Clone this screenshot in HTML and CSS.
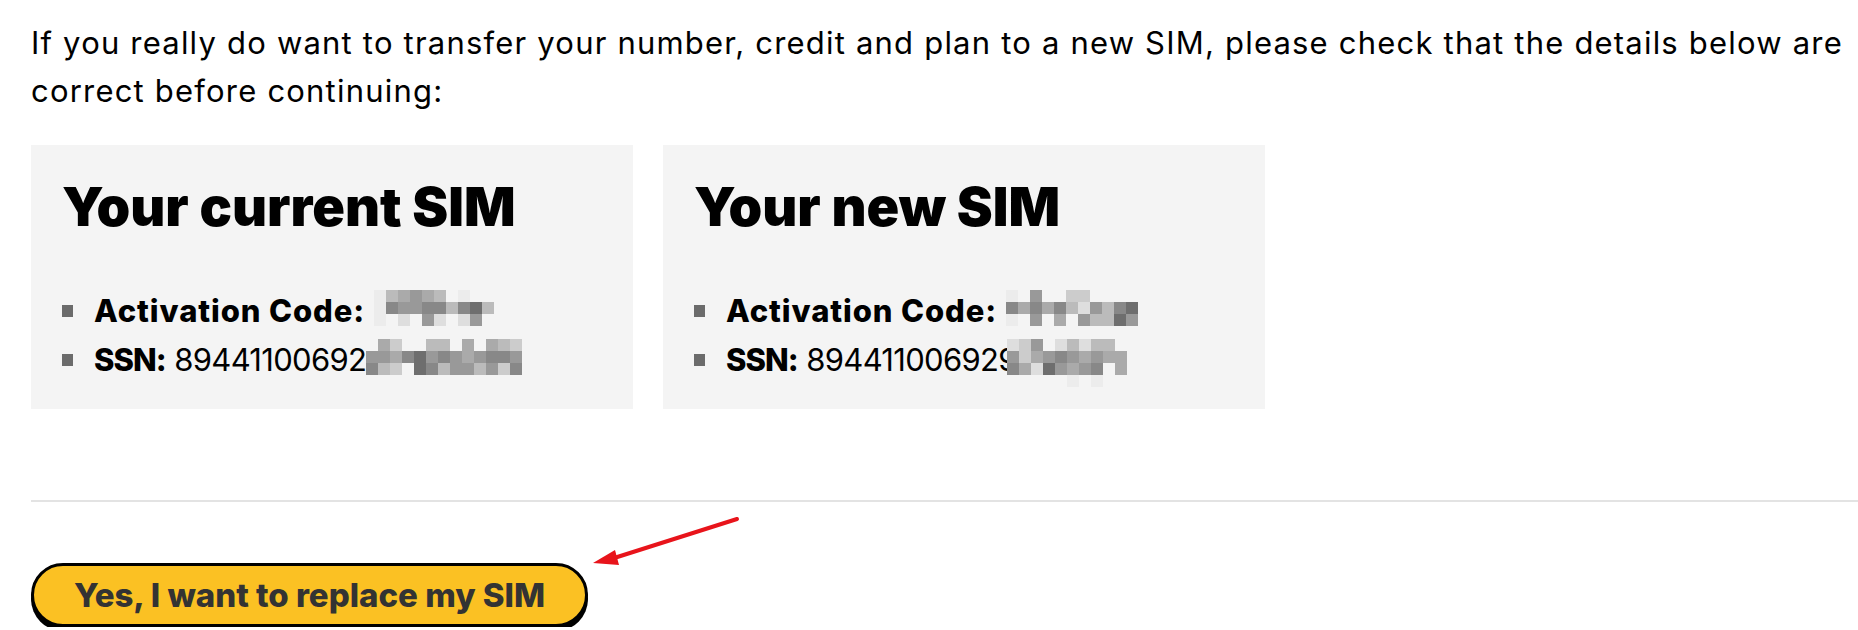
FILE: index.html
```html
<!DOCTYPE html>
<html lang="en">
<head>
<meta charset="utf-8">
<title>Replace SIM</title>
<link rel="stylesheet" href="styles.css">
</head>
<body>
<main class="page">
  <p class="intro">If you really do want to transfer your number, credit and plan to a new SIM, please check that the details below are correct before continuing:</p>
  <div class="cards">
    <section class="card">
      <h2 class="card-title">Your current SIM</h2>
      <ul class="details">
        <li><strong>Activation Code:</strong> <span class="mosaic m10"><i class="c1"></i><i class="c4"></i><i class="c5"></i><i class="c6"></i><i class="c5"></i><i class="c4"></i><i class="c0"></i><i class="c1"></i><i class="c0"></i><i class="c0"></i><i class="c1"></i><i class="c7"></i><i class="c6"></i><i class="c6"></i><i class="c7"></i><i class="c7"></i><i class="c4"></i><i class="c7"></i><i class="c8"></i><i class="c4"></i><i class="c1"></i><i class="c0"></i><i class="c2"></i><i class="c0"></i><i class="c6"></i><i class="c2"></i><i class="c0"></i><i class="c2"></i><i class="c6"></i><i class="c0"></i></span></li>
        <li><strong class="short">SSN:</strong> <span class="ssn">89441100692</span><span class="mosaic m13"><i class="c0"></i><i class="c5"></i><i class="c3"></i><i class="c0"></i><i class="c0"></i><i class="c4"></i><i class="c4"></i><i class="c0"></i><i class="c5"></i><i class="c0"></i><i class="c5"></i><i class="c4"></i><i class="c3"></i><i class="c6"></i><i class="c6"></i><i class="c5"></i><i class="c7"></i><i class="c8"></i><i class="c6"></i><i class="c7"></i><i class="c6"></i><i class="c5"></i><i class="c6"></i><i class="c7"></i><i class="c7"></i><i class="c6"></i><i class="c7"></i><i class="c4"></i><i class="c3"></i><i class="c0"></i><i class="c8"></i><i class="c7"></i><i class="c4"></i><i class="c6"></i><i class="c6"></i><i class="c4"></i><i class="c6"></i><i class="c3"></i><i class="c7"></i></span></li>
      </ul>
    </section>
    <section class="card">
      <h2 class="card-title">Your new SIM</h2>
      <ul class="details">
        <li><strong>Activation Code:</strong> <span class="mosaic m11"><i class="c1"></i><i class="c0"></i><i class="c6"></i><i class="c0"></i><i class="c0"></i><i class="c3"></i><i class="c3"></i><i class="c0"></i><i class="c0"></i><i class="c0"></i><i class="c0"></i><i class="c7"></i><i class="c5"></i><i class="c7"></i><i class="c5"></i><i class="c7"></i><i class="c4"></i><i class="c2"></i><i class="c6"></i><i class="c4"></i><i class="c7"></i><i class="c8"></i><i class="c1"></i><i class="c0"></i><i class="c6"></i><i class="c0"></i><i class="c5"></i><i class="c0"></i><i class="c6"></i><i class="c4"></i><i class="c4"></i><i class="c8"></i><i class="c6"></i></span></li>
        <li><strong class="short">SSN:</strong> <span class="ssn">894411006929</span><span class="mosaic m10 shift"><i class="c2"></i><i class="c3"></i><i class="c6"></i><i class="c0"></i><i class="c2"></i><i class="c4"></i><i class="c2"></i><i class="c4"></i><i class="c4"></i><i class="c0"></i><i class="c6"></i><i class="c3"></i><i class="c5"></i><i class="c6"></i><i class="c7"></i><i class="c6"></i><i class="c5"></i><i class="c6"></i><i class="c5"></i><i class="c5"></i><i class="c7"></i><i class="c5"></i><i class="c2"></i><i class="c8"></i><i class="c6"></i><i class="c5"></i><i class="c6"></i><i class="c7"></i><i class="c0"></i><i class="c5"></i><i class="c0"></i><i class="c0"></i><i class="c0"></i><i class="c0"></i><i class="c0"></i><i class="c1"></i><i class="c0"></i><i class="c1"></i><i class="c0"></i><i class="c0"></i></span></li>
      </ul>
    </section>
  </div>
  <hr class="rule">
  <div class="actions">
    <button class="btn-primary" type="button">Yes, I want to replace my SIM</button>
    <svg class="arrow" width="160" height="60" viewBox="0 0 160 60" aria-hidden="true">
      <line x1="146" y1="6" x2="20" y2="46" stroke="#e8141b" stroke-width="4" stroke-linecap="round"/>
      <polygon points="2,50 24,37 28,52" fill="#e8141b"/>
    </svg>
  </div>
</main>
</body>
</html>
```

FILE: styles.css
```css
* { box-sizing: border-box; }
body {
  margin: 0;
  background: #ffffff;
  color: #000000;
  font-family: "Inter", "Open Sans", sans-serif;
}
.page {
  padding-left: 31px;
  overflow: hidden;
}
.intro {
  margin: 19px 0 30px;
  font-size: 31px;
  line-height: 48px;
  font-weight: 400;
  letter-spacing: 1.2px;
}
.cards {
  display: flex;
  gap: 30px;
}
.card {
  width: 602px;
  height: 264px;
  background: #f4f4f4;
  padding: 32px 31px 0;
}
.card-title {
  margin: 0;
  font-size: 54px;
  line-height: 60px;
  font-weight: 900;
  letter-spacing: 0;
}
.details {
  list-style: none;
  margin: 49px 0 0;
  padding: 0;
}
.details li {
  font-size: 31px;
  line-height: 49px;
  height: 49px;
  white-space: nowrap;
}
.details li::before {
  content: "";
  display: inline-block;
  width: 11px;
  height: 12px;
  background: #6b6b6b;
  margin-right: 21px;
  vertical-align: 5px;
}
.details strong {
  font-weight: 800;
  letter-spacing: 0.9px;
}
.details strong.short { letter-spacing: -1px; }
.ssn { letter-spacing: -0.7px; }
.mosaic {
  display: inline-grid;
  grid-auto-rows: 12px;
  height: 36px;
  vertical-align: top;
  margin-top: 4px;
}
.m10 { grid-template-columns: repeat(10, 12px); }
.m11 { grid-template-columns: repeat(11, 12px); }
.m13 { grid-template-columns: repeat(13, 12px); }
.shift { margin-left: -10px; }
.mosaic i { display: block; }
.c0 { background: #f4f4f4; }
.c1 { background: #ececec; }
.c2 { background: #dedede; }
.c3 { background: #cccccc; }
.c4 { background: #bbbbbb; }
.c5 { background: #aaaaaa; }
.c6 { background: #999999; }
.c7 { background: #888888; }
.c8 { background: #6e6e6e; }
.rule {
  margin: 91px 0 0;
  border: 0;
  border-top: 2px solid #e3e3e3;
}
.actions {
  position: relative;
  display: flex;
  padding-top: 61px;
}
.btn-primary {
  height: 64px;
  width: 557px;
  border: 3px solid #000;
  border-radius: 32px;
  background: #fbc123;
  box-shadow: 0 4px 0 #000;
  color: #333333;
  font-family: inherit;
  font-size: 33px;
  font-weight: 800;
  padding: 0;
}
.arrow {
  position: absolute;
  left: 560px;
  top: 11px;
}
```
